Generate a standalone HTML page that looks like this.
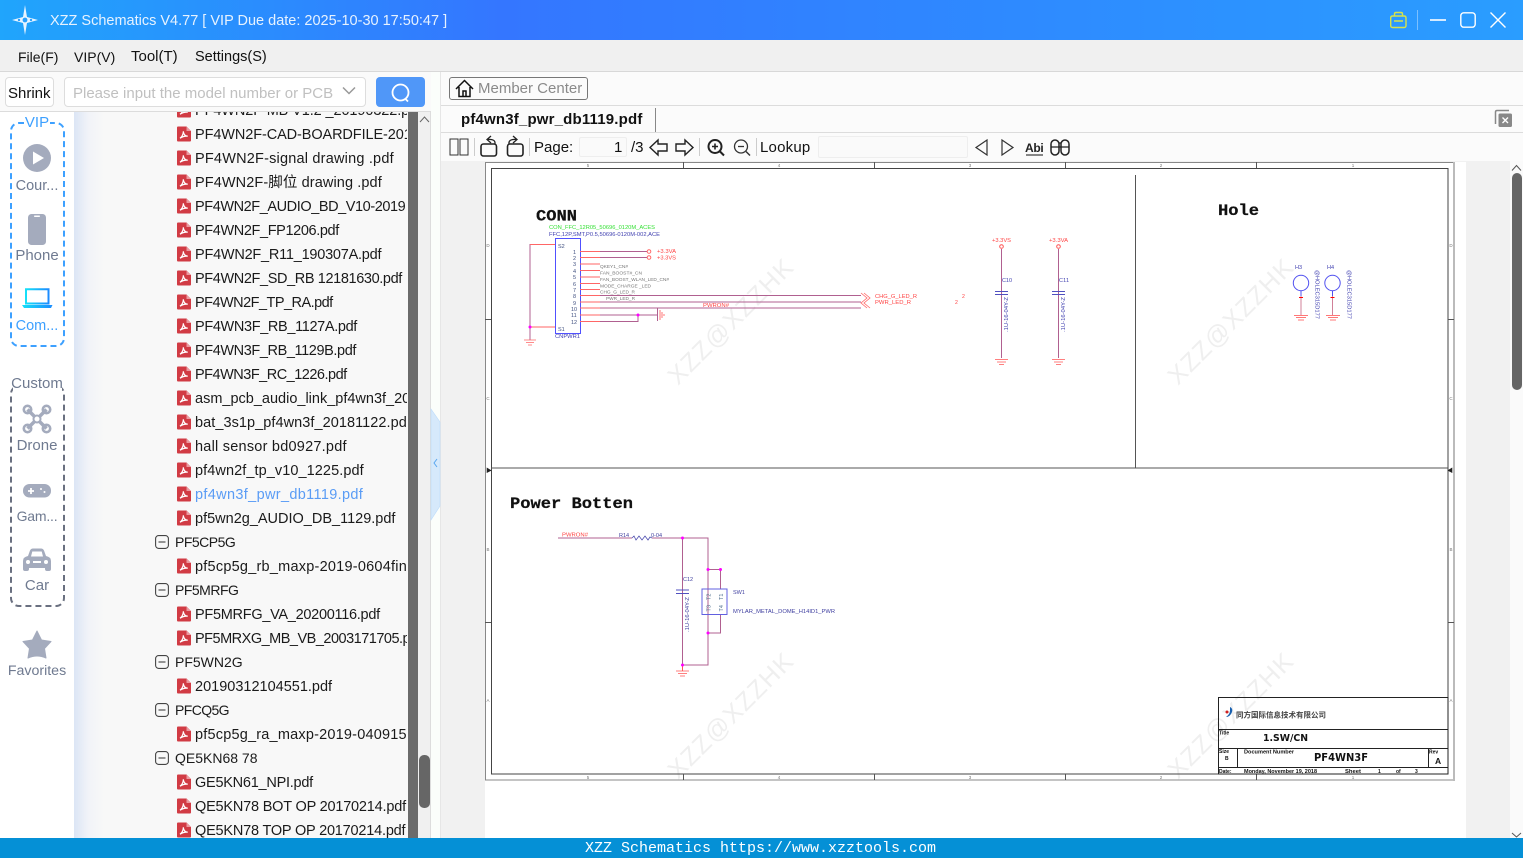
<!DOCTYPE html>
<html><head><meta charset="utf-8"><title>XZZ Schematics</title>
<style>
html,body{margin:0;padding:0;width:1523px;height:858px;overflow:hidden;background:#fff;font-family:"Liberation Sans","Noto Sans CJK SC",sans-serif;font-size:15px;color:#111}
div,span{position:absolute;box-sizing:border-box;white-space:nowrap}
.t{line-height:20px;height:20px}
.r{left:195px;height:24px;line-height:26px;width:212px;overflow:hidden;color:#1a1a1a;font-size:14.5px}
.f{left:175px;height:24px;line-height:25px;color:#1a1a1a;font-size:14px}
.side{color:#6f7a90;width:74px;left:0;text-align:center;line-height:20px;height:20px;font-size:14.5px}
svg{position:absolute;overflow:visible}
</style></head><body>
<svg width="0" height="0" style="position:absolute"><defs>
<symbol id="pdf" viewBox="0 0 16 16"><path d="M1 1.5Q1 .5 2 .5H10.5L15 5V14.5Q15 15.5 14 15.5H2Q1 15.5 1 14.5Z" fill="#d13b44"/><path d="M10.5 .5V5H15Z" fill="#eb9aa0"/><path d="M4 12.2C6 11 7.5 8 7.3 5.3C7.5 8 9 10 11.8 10.2C9.5 10 6.5 10.6 4 12.2Z" fill="none" stroke="#fff" stroke-width="1.2"/></symbol>
<symbol id="minus" viewBox="0 0 14 14"><rect x=".6" y=".6" width="12.8" height="12.8" rx="3" fill="none" stroke="#444" stroke-width="1.1"/><path d="M3.5 7H10.5" stroke="#444" stroke-width="1.1"/></symbol>
</defs></svg>

<!-- title bar -->
<div style="left:0;top:0;width:1523px;height:40px;background:linear-gradient(90deg,#20a5fc 0,#3476ff 33%,#2f86ff 60%,#2a9dff 100%)"></div>
<svg style="left:10px;top:5px" width="30" height="30" viewBox="0 0 30 30"><path d="M15 0L17 12L28 15L17 18L15 30L13 18L2 15L13 12Z" fill="#e8f4ff"/><circle cx="15" cy="15" r="2.4" fill="#2aa0fc"/><circle cx="9" cy="15" r="1.2" fill="#2aa0fc"/><circle cx="21" cy="15" r="1.2" fill="#2aa0fc"/></svg>
<div class="t" style="left:50px;top:11px;color:#e6f2ff;font-size:14.5px">XZZ Schematics V4.77 [ VIP Due date: 2025-10-30 17:50:47 ]</div>
<svg style="left:1360px;top:0" width="163" height="40" viewBox="0 0 163 40" fill="none">
<path d="M30.700 18Q30.700 16 32.700 16H44Q46 16 46 18V25.500Q46 27.500 44 27.500H32.700Q30.700 27.500 30.700 25.500Z M34.500 16V14Q34.500 12.500 36 12.500H41Q42.500 12.500 42.500 14V16M34 21H43" stroke="#d6e34a" stroke-width="1.400"/>
<path d="M57.500 10V30" stroke="#7cc0ff" stroke-width="1"/>
<path d="M70 20H86" stroke="#fff" stroke-width="1.6"/>
<rect x="100.800" y="12.800" width="14.400" height="14.400" rx="3" stroke="#fff" stroke-width="1.400"/>
<path d="M130.500 12.500L145.500 27.500M145.500 12.500L130.500 27.500" stroke="#fff" stroke-width="1.400"/></svg>

<!-- menu -->
<div style="left:0;top:40px;width:1523px;height:32px;background:#f0f0f0;border-bottom:1px solid #d8d8d8"></div>
<div class="t" style="left:18px;top:47px;font-size:14px">File(F)</div>
<div class="t" style="left:74px;top:47px;font-size:14px">VIP(V)</div>
<div class="t" style="left:131px;top:47px">Tool(T)</div>
<div class="t" style="left:195px;top:47px;font-size:14.5px">Settings(S)</div>

<!-- left search strip -->
<div style="left:0;top:72px;width:431px;height:40px;background:#fafafa;border-bottom:1px solid #dcdcdc"></div>
<div style="left:5px;top:77px;width:49px;height:30px;background:#fff;border:1px solid #ddd;border-radius:4px"></div>
<div class="t" style="left:8px;top:84px">Shrink</div>
<div style="left:64px;top:77px;width:302px;height:30px;background:#fff;border:1px solid #ddd;border-radius:4px"></div>
<div class="t" style="left:73px;top:84px;color:#c0c0c0">Please input the model number or PCB</div>
<svg style="left:342px;top:86px" width="14" height="10" fill="none"><path d="M1 1.500L7 7.500L13 1.500" stroke="#999" stroke-width="1.500"/></svg>
<div style="left:376px;top:77px;width:49px;height:30px;background:#5097f8;border-radius:4px"></div>
<svg style="left:390px;top:82px" width="22" height="22" fill="none"><circle cx="10.500" cy="10.500" r="8" stroke="#fff" stroke-width="1.800"/><path d="M15.500 17L18 19.500" stroke="#fff" stroke-width="1.800"/></svg>

<!-- left rail -->
<div style="left:0;top:112px;width:74px;height:726px;background:#fff"></div>
<div style="left:10px;top:122px;width:55px;height:225px;border:2px dashed #3da0ff;border-radius:9px"></div>
<div style="left:24px;top:114px;width:26px;height:18px;line-height:18px;background:#fff;color:#3da0ff;text-align:center">VIP</div>
<svg style="left:23px;top:144px" width="28" height="28"><circle cx="14" cy="14" r="14" fill="#a4abbd"/><path d="M10 7.500L21 14L10 20.500Z" fill="#fff"/></svg>
<div class="side" style="top:176px">Cour...</div>
<svg style="left:28px;top:214px" width="18" height="31"><rect x="0" y="0" width="18" height="31" rx="3.500" fill="#a4abbd"/><rect x="6" y="1.500" width="6" height="1.500" rx=".7" fill="#fff"/></svg>
<div class="side" style="top:246px;font-size:15px">Phone</div>
<svg style="left:22px;top:288px" width="31" height="21"><defs><linearGradient id="lp" x1="0" x2="1"><stop offset="0" stop-color="#15e0f8"/><stop offset="1" stop-color="#1c8cff"/></linearGradient></defs><path d="M4 1.200H26.500V15.500H4Z" fill="none" stroke="url(#lp)" stroke-width="2"/><path d="M0 17H30.500L29 20H2Z" fill="url(#lp)"/></svg>
<div class="side" style="top:316px;color:#3da0ff">Com...</div>

<div style="left:10px;top:385px;width:55px;height:222px;border:2px dashed #6a7080;border-radius:9px"></div>
<div style="left:13px;top:375px;width:49px;height:18px;background:#fff"></div>
<div class="side" style="top:374px;font-size:15px">Custom</div>
<svg style="left:22px;top:404px" width="30" height="30" fill="none" stroke="#a4abbd"><path d="M5.500 5.500L24.500 24.500M24.500 5.500L5.500 24.500" stroke-width="3.500"/><circle cx="5.500" cy="5.500" r="3.700" stroke-width="2.600"/><circle cx="24.500" cy="5.500" r="3.700" stroke-width="2.600"/><circle cx="5.500" cy="24.500" r="3.700" stroke-width="2.600"/><circle cx="24.500" cy="24.500" r="3.700" stroke-width="2.600"/><circle cx="15" cy="15" r="3.500" fill="#fff" stroke-width="2"/></svg>
<div class="side" style="top:436px;font-size:15px">Drone</div>
<svg style="left:23px;top:484px" width="28" height="14"><rect width="28" height="13.500" rx="6.500" fill="#a4abbd"/><path d="M5 7H11M8 4V10" stroke="#fff" stroke-width="1.800"/><circle cx="18" cy="5" r="1" fill="#fff"/><circle cx="21.500" cy="8" r="1" fill="#fff"/></svg>
<div class="side" style="top:506px;font-size:14px;letter-spacing:-.2px">Gam...</div>
<svg style="left:23px;top:548px" width="28" height="24"><path d="M5 8L7 2.500Q8 .5 10 .5H18Q20 .5 21 2.500L23 8Q28 9 28 13V21Q28 23 26 23H24Q22 23 22 21V20H6V21Q6 23 4 23H2Q0 23 0 21V13Q0 9 5 8Z" fill="#a4abbd"/><path d="M8 8.500L9.300 3.500H18.700L20 8.500Z" fill="#fff"/><circle cx="5" cy="14" r="2" fill="#fff"/><circle cx="23" cy="14" r="2" fill="#fff"/><rect x="10" y="13" width="8" height="2" fill="#fff"/></svg>
<div class="side" style="top:576px;font-size:15px">Car</div>
<svg style="left:22px;top:630px" width="30" height="29"><path d="M15 1L19.500 10L29 11.500L22.500 18.500L24 28Q15 24 6 28L7.500 18.500L1 11.500L10.500 10Z" fill="#a4abbd" stroke="#a4abbd" stroke-linejoin="round"/></svg>
<div class="side" style="top:661px;font-size:14.2px">Favorites</div>

<!-- tree -->
<div style="left:74px;top:112px;width:334px;height:726px;background:linear-gradient(90deg,#dbe5f5 0,#f1f3f8 14px,#f8f8f8 30px);overflow:hidden">
<div style="left:-74px;top:-112px;width:408px;height:838px">
<div class="r" style="top:98px;letter-spacing:-.1px">PF4WN2F-MB V1.2 _20190322.pdf</div>
<div class="r" style="top:122px;letter-spacing:-.1px">PF4WN2F-CAD-BOARDFILE-2019</div>
<div class="r" style="top:146px;letter-spacing:.2px">PF4WN2F-signal drawing .pdf</div>
<div class="r" style="top:170px;letter-spacing:.1px">PF4WN2F-脚位 drawing .pdf</div>
<div class="r" style="top:194px;letter-spacing:-.42px">PF4WN2F_AUDIO_BD_V10-2019</div>
<div class="r" style="top:218px;letter-spacing:-.38px">PF4WN2F_FP1206.pdf</div>
<div class="r" style="top:242px;letter-spacing:-.23px">PF4WN2F_R11_190307A.pdf</div>
<div class="r" style="top:266px;letter-spacing:-.38px">PF4WN2F_SD_RB 12181630.pdf</div>
<div class="r" style="top:290px;letter-spacing:-.53px">PF4WN2F_TP_RA.pdf</div>
<div class="r" style="top:314px;letter-spacing:-.35px">PF4WN3F_RB_1127A.pdf</div>
<div class="r" style="top:338px;letter-spacing:-.4px">PF4WN3F_RB_1129B.pdf</div>
<div class="r" style="top:362px;letter-spacing:-.5px">PF4WN3F_RC_1226.pdf</div>
<div class="r" style="top:386px">asm_pcb_audio_link_pf4wn3f_2019</div>
<div class="r" style="top:410px;letter-spacing:.06px">bat_3s1p_pf4wn3f_20181122.pdf</div>
<div class="r" style="top:434px;letter-spacing:.23px">hall sensor bd0927.pdf</div>
<div class="r" style="top:458px;letter-spacing:.08px">pf4wn2f_tp_v10_1225.pdf</div>
<div class="r" style="top:482px;letter-spacing:.34px;color:#5a9cf5">pf4wn3f_pwr_db1119.pdf</div>
<div class="r" style="top:506px">pf5wn2g_AUDIO_DB_1129.pdf</div>
<div class="f" style="top:530px;letter-spacing:-.5px">PF5CP5G</div>
<div class="r" style="top:554px;letter-spacing:.23px">pf5cp5g_rb_maxp-2019-0604final</div>
<div class="f" style="top:578px;letter-spacing:-.5px">PF5MRFG</div>
<div class="r" style="top:602px;letter-spacing:-.28px">PF5MRFG_VA_20200116.pdf</div>
<div class="r" style="top:626px;letter-spacing:-.5px">PF5MRXG_MB_VB_2003171705.pdf</div>
<div class="f" style="top:650px">PF5WN2G</div>
<div class="r" style="top:674px">20190312104551.pdf</div>
<div class="f" style="top:698px;letter-spacing:-.6px">PFCQ5G</div>
<div class="r" style="top:722px;letter-spacing:.2px">pf5cp5g_ra_maxp-2019-04091530</div>
<div class="f" style="top:746px">QE5KN68 78</div>
<div class="r" style="top:770px;letter-spacing:-.25px">GE5KN61_NPI.pdf</div>
<div class="r" style="top:794px;letter-spacing:-.2px">QE5KN78 BOT OP 20170214.pdf</div>
<div class="r" style="top:818px;height:20px;letter-spacing:-.2px">QE5KN78 TOP OP 20170214.pdf</div>
<svg style="left:176px;top:0" width="16" height="838">
<use href="#pdf" y="102" width="16" height="16"/><use href="#pdf" y="126" width="16" height="16"/><use href="#pdf" y="150" width="16" height="16"/><use href="#pdf" y="174" width="16" height="16"/><use href="#pdf" y="198" width="16" height="16"/><use href="#pdf" y="222" width="16" height="16"/><use href="#pdf" y="246" width="16" height="16"/><use href="#pdf" y="270" width="16" height="16"/><use href="#pdf" y="294" width="16" height="16"/><use href="#pdf" y="318" width="16" height="16"/><use href="#pdf" y="342" width="16" height="16"/><use href="#pdf" y="366" width="16" height="16"/><use href="#pdf" y="390" width="16" height="16"/><use href="#pdf" y="414" width="16" height="16"/><use href="#pdf" y="438" width="16" height="16"/><use href="#pdf" y="462" width="16" height="16"/><use href="#pdf" y="486" width="16" height="16"/><use href="#pdf" y="510" width="16" height="16"/><use href="#pdf" y="558" width="16" height="16"/><use href="#pdf" y="606" width="16" height="16"/><use href="#pdf" y="630" width="16" height="16"/><use href="#pdf" y="678" width="16" height="16"/><use href="#pdf" y="726" width="16" height="16"/><use href="#pdf" y="774" width="16" height="16"/><use href="#pdf" y="798" width="16" height="16"/><use href="#pdf" y="822" width="16" height="16"/>
</svg>
<svg style="left:155px;top:0" width="14" height="838">
<use href="#minus" y="535" width="14" height="14"/><use href="#minus" y="583" width="14" height="14"/><use href="#minus" y="655" width="14" height="14"/><use href="#minus" y="703" width="14" height="14"/><use href="#minus" y="751" width="14" height="14"/>
</svg>
</div></div>
<div style="left:408px;top:112px;width:10px;height:726px;background:#6b6b6b"></div>
<div style="left:418px;top:112px;width:13px;height:726px;background:#f0f0f0;border-right:1px solid #ddd"></div>
<svg style="left:419px;top:115px" width="11" height="9" fill="none"><path d="M1 7L5.500 2L10 7" stroke="#666" stroke-width="1"/></svg>
<div style="left:419px;top:755px;width:11px;height:53px;background:#666;border-radius:5px"></div>
<!-- splitter -->
<div style="left:431px;top:72px;width:10px;height:766px;background:#fbfefb;border-right:1px solid #e6e6e6"></div>
<svg style="left:431px;top:408px" width="10" height="114"><path d="M0 1L9 14V98L0 112Z" fill="#d6e9fb" stroke="#bcdcfb" stroke-width=".6"/><path d="M6 51L3 55L6 59" fill="none" stroke="#5aa7f0" stroke-width="1"/></svg>

<!-- right top rows -->
<div style="left:441px;top:72px;width:1082px;height:34px;background:#fbfbfb;border-bottom:1px solid #dcdcdc"></div>
<div style="left:449px;top:77px;width:139px;height:23px;border:1px solid #777;border-radius:3px"></div>
<svg style="left:455px;top:79px" width="19" height="19" fill="none" stroke="#111" stroke-width="1.500"><path d="M1 10L9.500 1.500L18 10M4 8V17.500H15V8M8 17.500V12H11V17.500"/></svg>
<div class="t" style="left:478px;top:79px;color:#8a8a8a">Member Center</div>
<div style="left:441px;top:106px;width:1082px;height:27px;background:#fbfbfb;border-bottom:1px solid #dcdcdc"></div>
<div class="t" style="left:461px;top:110px;font-weight:bold;color:#111;font-size:15px;letter-spacing:.18px">pf4wn3f_pwr_db1119.pdf</div>
<div style="left:655px;top:108px;width:1px;height:24px;background:#888"></div>
<svg style="left:1494px;top:109px" width="19" height="19"><path d="M1.500 15V3Q1.500 1.500 3 1.500H15" fill="none" stroke="#888" stroke-width="1.500"/><rect x="4.500" y="4.500" width="13.500" height="13.500" rx="1.500" fill="#888"/><path d="M8.500 8.500L14 14M14 8.500L8.500 14" stroke="#fff" stroke-width="1.400"/></svg>

<!-- pdf toolbar -->
<div style="left:441px;top:133px;width:1082px;height:28px;background:#fbfbfb"></div>
<svg style="left:441px;top:133px" width="640" height="28" viewBox="441 133 640 28" fill="none" stroke="#222" stroke-width="1.300">
<rect x="450" y="139" width="8" height="16" stroke="#333" stroke-width="1"/><rect x="460" y="139" width="8" height="16" stroke="#333" stroke-width="1"/>
<path d="M474.500 138V156M529.500 138V156M699.500 138V156M756.500 138V156" stroke="#ccc" stroke-width="1"/>
<rect x="481" y="144" width="15.500" height="12" rx="2.500" stroke-width="1.600"/><path d="M495 144C495.500 140.500 493 139 487.500 139.500M491 136L487 139.500L491 143" stroke-width="1.300"/>
<rect x="507.500" y="144" width="15.500" height="12" rx="2.500" stroke-width="1.600"/><path d="M509 144C508.500 140.500 511 139 516.500 139.500M513 136L517 139.500L513 143" stroke-width="1.300"/>
<path d="M650 147.500L658 140V144H667V151H658V155Z" stroke-width="1.400"/>
<path d="M693 147.500L685 140V144H676V151H685V155Z" stroke-width="1.400"/>
<circle cx="715" cy="146.500" r="6.500" stroke-width="2"/><path d="M720 151.500L724 155.500" stroke-width="2"/><path d="M712 146.500H718M715 143.500V149.500" stroke-width="1.600"/>
<circle cx="741" cy="146.500" r="6.500" stroke="#333" stroke-width="1.300"/><path d="M746 151.500L750 155.500" stroke="#333" stroke-width="1.500"/><path d="M738 146.500H744" stroke="#333"/>
<path d="M987 140V155L976 147.500ZM1002 140V155L1013 147.500Z" stroke="#333" stroke-width="1.200"/>
<path d="M1026 155H1043" stroke="#111" stroke-width="1"/>
<rect x="1051" y="140" width="8" height="15" rx="4" stroke-width="1.500"/><rect x="1061" y="140" width="8" height="15" rx="4" stroke-width="1.500"/><path d="M1051 147H1069M1059 143H1061" stroke-width="1.300"/>
</svg>
<div class="t" style="left:534px;top:138px">Page:</div>
<div style="left:579px;top:137px;width:48px;height:20px;background:#fafafa;border:1px solid #eee;border-radius:2px"></div>
<div class="t" style="left:614px;top:138px">1</div>
<div class="t" style="left:631px;top:138px">/3</div>
<div class="t" style="left:760px;top:138px;letter-spacing:.2px">Lookup</div>
<div style="left:818px;top:136px;width:150px;height:22px;background:#fafafa;border:1px solid #eee;border-radius:2px"></div>
<div style="left:1025px;top:142px;height:12px;line-height:12px;font-size:12px;font-weight:bold;color:#222;letter-spacing:-.3px">Abi</div>

<!-- pdf area -->
<div style="left:441px;top:161px;width:1069px;height:677px;background:#f1f1f1"></div>
<div style="left:1510px;top:161px;width:13px;height:677px;background:#fafafa"></div>
<div style="left:1512px;top:173px;width:10px;height:217px;background:#666;border-radius:5px"></div>
<svg style="left:1511px;top:164px" width="11" height="8" fill="none"><path d="M1 6.500L5.500 1.500L10 6.500" stroke="#555"/></svg>
<svg style="left:1511px;top:832px" width="11" height="6" fill="none"><path d="M1 1L5.500 5L10 1" stroke="#555"/></svg>
<div style="left:485px;top:162px;width:981px;height:676px;background:#fff"></div>

<svg style="left:0;top:0" width="1523" height="838" viewBox="0 0 1523 838" font-family="Liberation Sans" font-size="5">
<defs><clipPath id="pg"><rect x="485" y="162" width="981" height="676"/></clipPath></defs>
<g clip-path="url(#pg)" fill="#efefef" font-size="25" font-family="Liberation Sans">
<text transform="translate(678,386) rotate(-45)" textLength="165">XZZ@XZZHK</text>
<text transform="translate(1178,386) rotate(-45)" textLength="165">XZZ@XZZHK</text>
<text transform="translate(678,780) rotate(-45)" textLength="165">XZZ@XZZHK</text>
<text transform="translate(1178,780) rotate(-45)" textLength="165">XZZ@XZZHK</text>
</g>
<!-- frame -->
<g fill="none">
<rect x="485.500" y="162.500" width="968" height="617.500" stroke="#888" stroke-width="1"/>
<path d="M1454 162V781" stroke="#bbb" stroke-width="2"/>
<rect x="491.500" y="168.500" width="956.500" height="605.500" stroke="#444" stroke-width="1"/>
<path d="M1135.500 175V468M491 468H1448" stroke="#555" stroke-width="1"/>
<path d="M683.500 162V168M874.500 162V168M1065.500 162V168M1256.500 162V168M683.500 774V780M874.500 774V780M1065.500 774V780M1256.500 774V780M485 319.500H491M485 622.500H491M1448 319.500H1454M1448 622.500H1454" stroke="#555"/>
<path d="M487 470.500V468L491 470.500L487 472.500ZM1452 468L1448 470.500L1452 472.500Z" fill="#222" stroke="#222" stroke-width=".6"/>
</g>
<g fill="#777" font-size="4.500" text-anchor="middle">
<text x="588" y="167">5</text><text x="779" y="167">4</text><text x="970" y="167">3</text><text x="1161" y="167">2</text><text x="1353" y="167">1</text>
<text x="588" y="779">5</text><text x="779" y="779">4</text><text x="970" y="779">3</text><text x="1161" y="779">2</text><text x="1353" y="779">1</text>
<text x="488" y="247">D</text><text x="488" y="400">C</text><text x="488" y="551">B</text><text x="488" y="702">A</text>
<text x="1451" y="247">D</text><text x="1451" y="400">C</text><text x="1451" y="551">B</text><text x="1451" y="702">A</text>
</g>
<!-- titles -->
<g font-family="Liberation Mono" font-weight="bold" fill="#111" font-size="16">
<text x="536" y="220.500" textLength="41" lengthAdjust="spacingAndGlyphs" stroke="#111" stroke-width=".25">CONN</text>
<text x="1218" y="215" textLength="41" lengthAdjust="spacingAndGlyphs" stroke="#111" stroke-width=".25">Hole</text>
<text x="510" y="508" textLength="123" lengthAdjust="spacingAndGlyphs" stroke="#111" stroke-width=".25">Power Botten</text>
</g>
<text x="549" y="229" fill="#35e035" textLength="106" lengthAdjust="spacingAndGlyphs">CON_FFC_12R05_50696_0120M_ACES</text>
<text x="549" y="236" fill="#4040b0" textLength="111" lengthAdjust="spacingAndGlyphs">FFC,12P,SMT,P0.5,50696-0120M-002,ACE</text>
<!-- connector -->
<rect x="555.500" y="238.500" width="25" height="95" fill="none" stroke="#5050ff" stroke-width="1"/>
<g fill="#405080" font-size="5.500"><text x="558" y="248">S2</text><text x="558" y="331">S1</text>
<text x="573" y="254">1</text><text x="573" y="260">2</text><text x="573" y="266">3</text><text x="573" y="273">4</text><text x="573" y="279">5</text><text x="573" y="286">6</text><text x="573" y="292">7</text><text x="573" y="298">8</text><text x="573" y="305">9</text><text x="571" y="311">10</text><text x="571" y="317">11</text><text x="571" y="324">12</text></g>
<text x="555" y="338" fill="#4040b0" textLength="25" lengthAdjust="spacingAndGlyphs">CNPWR1</text>
<g stroke="#b06090" stroke-width="1" fill="none">
<path d="M600 251.500H647M600 257.500H647M600 295.500H861M600 302H861M600 308H861M600 315H657M600 321.500H638V315M530 244V340"/>
<path d="M657.500 308V321" stroke-width="1"/><path d="M660 310V320M662 312V318M664 314V316" stroke="#f77"/>
</g>
<g stroke="#f66" stroke-width="1" fill="none">
<path d="M580 251.500H600M580 257.500H600M580 264H600M580 270.500H600M580 277H600M580 283.500H600M580 289.500H600M580 295.500H600M580 302H600M580 308H600M580 315H600M580 321.500H600M530 244.500H555M530 327H555"/>
<circle cx="649" cy="251.500" r="1.800"/><circle cx="649" cy="257.500" r="1.800"/>
<path d="M861 293L867 298L861 303L867 308" stroke-width=".8"/><path d="M864 293L870 298L864 303L870 308" stroke-width=".8"/>
<path d="M524 340H536M526 342.500H534M528 345H532" stroke-width=".8"/>
</g>
<g fill="#f44" font-size="5.200"><text x="657" y="253" textLength="19" lengthAdjust="spacingAndGlyphs">+3.3VA</text><text x="657" y="259.500" textLength="19" lengthAdjust="spacingAndGlyphs">+3.3VS</text><text x="703" y="307" textLength="26" lengthAdjust="spacingAndGlyphs">PWRON#</text><text x="875" y="298" textLength="42" lengthAdjust="spacingAndGlyphs">CHG_G_LED_R</text><text x="875" y="304" textLength="36" lengthAdjust="spacingAndGlyphs">PWR_LED_R</text><text x="962" y="298">2</text><text x="955" y="304">2</text><text x="992" y="242" textLength="19" lengthAdjust="spacingAndGlyphs">+3.3VS</text><text x="1049" y="242" textLength="19" lengthAdjust="spacingAndGlyphs">+3.3VA</text></g>
<g fill="#777" font-size="4.500"><text x="600" y="268" textLength="28" lengthAdjust="spacingAndGlyphs">QKEY1_CN#</text><text x="600" y="274.500" textLength="42" lengthAdjust="spacingAndGlyphs">FAN_BOOST#_CN</text><text x="600" y="281" textLength="69" lengthAdjust="spacingAndGlyphs">FAN_BOOST_WLAN_LED_CN#</text><text x="600" y="287.500" textLength="51" lengthAdjust="spacingAndGlyphs">MODE_CHARGE _LED</text><text x="600" y="293.500" textLength="35" lengthAdjust="spacingAndGlyphs">CHG_G_LED_R</text><text x="606" y="300" textLength="29" lengthAdjust="spacingAndGlyphs">PWR_LED_R</text></g>
<circle cx="530" cy="327" r="1.500" fill="#f0f"/><circle cx="638" cy="315" r="1.500" fill="#f0f"/>
<!-- caps -->
<g fill="none" stroke-width="1">
<path d="M1001.500 249V358M1058.500 249V358" stroke="#b06090"/>
<circle cx="1001.500" cy="246.500" r="1.800" stroke="#f55"/><circle cx="1058.500" cy="246.500" r="1.800" stroke="#f55"/>
<path d="M995 291.500H1008M995 294.500H1008M1052 291.500H1065M1052 294.500H1065" stroke="#5050c0"/>
<path d="M995 359.500H1008M997 362H1006M999 364.500H1004M1052 359.500H1065M1054 362H1063M1056 364.500H1061" stroke="#f55" stroke-width=".8"/>
</g>
<g fill="#4040b0" font-size="5.500"><text x="1002" y="282" textLength="10">C10</text><text x="1059" y="282" textLength="10">C11</text>
<text transform="translate(1008,332) rotate(-90)" textLength="35" lengthAdjust="spacingAndGlyphs">.1U-16-04Y-Z</text><text transform="translate(1065,332) rotate(-90)" textLength="35" lengthAdjust="spacingAndGlyphs">.1U-16-04Y-Z</text>
<text x="1295" y="269">H3</text><text x="1327" y="269">H4</text>
<text transform="translate(1315.500,270) rotate(90)" textLength="49" lengthAdjust="spacingAndGlyphs">@HOLEC315D177</text><text transform="translate(1347.500,270) rotate(90)" textLength="49" lengthAdjust="spacingAndGlyphs">@HOLEC315D177</text></g>
<g fill="none" stroke-width="1">
<circle cx="1301" cy="283" r="7.700" stroke="#5050f0"/><circle cx="1332.500" cy="283" r="7.700" stroke="#5050f0"/>
<path d="M1301 291V296M1332.500 291V296" stroke="#5050f0"/>
<path d="M1301 296V315M1332.500 296V315" stroke="#d08098"/>
<path d="M1299 297.500H1303M1330.500 297.500H1334.500" stroke="#f00"/>
<path d="M1294 315.500H1308M1296 317.500H1306M1298 320H1304M1326 315.500H1340M1328 317.500H1338M1330 320H1336" stroke="#f77"/>
</g>
<!-- power button -->
<g fill="none" stroke-width="1">
<path d="M558 538H632M652 538H708V665H682.500M682.500 538V665M708 569.500H720.500V589M720.500 614.500V633H708" stroke="#b06090"/>
<path d="M632 538L634 536L636 540L639 536L642 540L645 536L648 540L650 537L652 538" stroke="#5050b0" stroke-width=".8"/>
<path d="M676 590H689M676 593.500H689" stroke="#5050c0"/>
<rect x="702" y="589" width="25" height="25.500" stroke="#6060e0"/>
<path d="M676 671H689M678 673.500H687M680 676H685" stroke="#f55" stroke-width=".8"/>
<path d="M682.500 665V671" stroke="#f55"/>
</g>
<g fill="#f0f"><circle cx="682.500" cy="538" r="1.500"/><circle cx="708" cy="569.500" r="1.500"/><circle cx="720.500" cy="569.500" r="1.500"/><circle cx="708" cy="633" r="1.500"/><circle cx="682.500" cy="665" r="1.500"/></g>
<text x="562" y="536.500" fill="#f44" font-size="5.200" textLength="26" lengthAdjust="spacingAndGlyphs">PWRON#</text>
<g fill="#4040a0" font-size="5.500"><text x="619" y="537">R14</text><text x="651" y="537">0-04</text><text x="683" y="581">C12</text><text transform="translate(689,632) rotate(-90)" textLength="35" lengthAdjust="spacingAndGlyphs">.1U-16-04Y-Z</text><text x="733" y="594">SW1</text><text x="733" y="613" textLength="102" lengthAdjust="spacingAndGlyphs">MYLAR_METAL_DOME_H14ID1_PWR</text></g>
<g fill="#507090" font-size="5.500"><text transform="translate(710.500,600) rotate(-90)">T2</text><text transform="translate(723,600) rotate(-90)">T1</text><text transform="translate(710.500,611.500) rotate(-90)">T3</text><text transform="translate(723,611.500) rotate(-90)">T4</text></g>
<!-- title block -->
<g fill="none" stroke="#222" stroke-width="1">
<rect x="1218.500" y="697.500" width="229.500" height="76.500"/>
<path d="M1218 729.500H1448M1218 748.500H1448M1218 767.500H1448M1237.500 748V767M1428.500 748V767"/>
</g>
<path d="M1230 707Q1234 709 1231 714Q1229 717 1226 717Q1230 714 1230 711Z" fill="#1860b0"/><circle cx="1227" cy="712" r="1.500" fill="#d02020"/>
<text x="1236" y="717.500" font-family="Noto Sans CJK SC" font-size="7.500" fill="#444" font-weight="bold">同方国际信息技术有限公司</text>
<g fill="#111" font-weight="bold"><text x="1219" y="734.500" font-size="5">Title</text><text x="1263" y="741" font-size="10" font-family="DejaVu Sans" textLength="45" lengthAdjust="spacingAndGlyphs">1.SW/CN</text>
<text x="1219" y="753" font-size="5">Size</text><text x="1225" y="760" font-size="5">B</text>
<text x="1244" y="753.500" font-size="5" textLength="50" lengthAdjust="spacingAndGlyphs">Document Number</text>
<text x="1314" y="761" font-size="11" font-family="DejaVu Sans" textLength="54" lengthAdjust="spacingAndGlyphs">PF4WN3F</text>
<text x="1429" y="753.500" font-size="5">Rev</text><text x="1435" y="764" font-size="8.500">A</text>
<text x="1219" y="773" font-size="5">Date:</text><text x="1244" y="773" font-size="5" textLength="73" lengthAdjust="spacingAndGlyphs">Monday, November 19, 2018</text><text x="1345" y="773" font-size="5" textLength="16" lengthAdjust="spacingAndGlyphs">Sheet</text><text x="1378" y="773" font-size="5">1</text><text x="1396" y="773" font-size="5">of</text><text x="1415" y="773" font-size="5">3</text></g>
</svg>

<!-- footer -->
<div style="left:0;top:838px;width:1523px;height:20px;background:#0590d6"></div>
<div style="left:585px;top:840px;height:18px;line-height:18px;font-family:'Liberation Mono',monospace;color:#fff;font-size:15px">XZZ Schematics https://www.xzztools.com</div>
</body></html>
